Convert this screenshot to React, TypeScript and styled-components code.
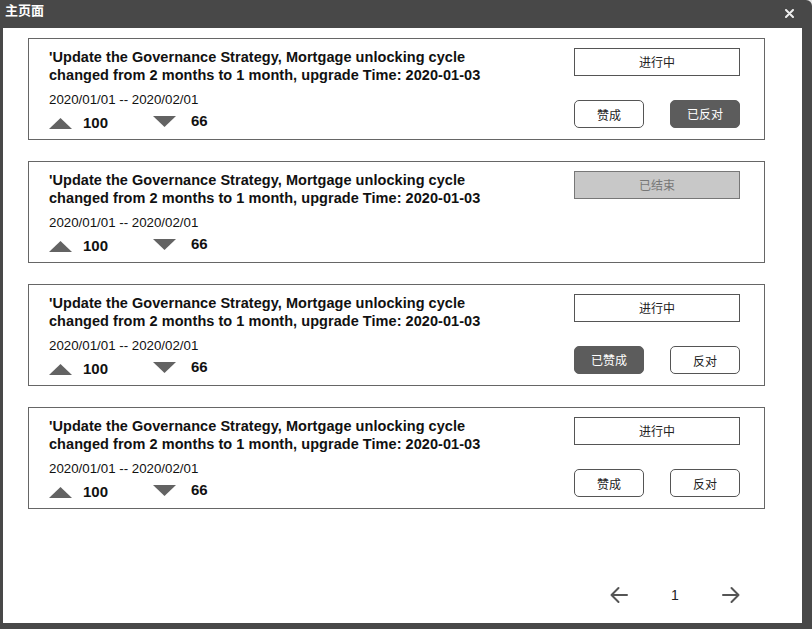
import styled, { createGlobalStyle } from 'styled-components';

const GlobalStyle = createGlobalStyle`
  html, body {
    margin: 0;
    padding: 0;
    background: #e6e6e6;
  }
  body {
    font-family: "Liberation Sans", "Noto Sans CJK SC", Arial, sans-serif;
    color: #111;
  }
`;

const Window = styled.div`
  width: 812px;
  height: 629px;
  display: flex;
  flex-direction: column;
  background: #484848;
  border-top-right-radius: 6px;
  overflow: hidden;
`;

const TitleBar = styled.div`
  height: 28px;
  flex-shrink: 0;
  display: flex;
  align-items: flex-start;
  justify-content: space-between;
  padding: 2px 18px 0 5px;
  box-sizing: border-box;
`;

const TitleText = styled.span`
  font-family: "Noto Sans CJK SC", sans-serif;
  font-size: 13px;
  font-weight: 700;
  line-height: 16px;
  color: #fff;
`;

const CloseBtn = styled.div`
  width: 9px;
  height: 9px;
  margin-top: 7px;
  display: flex;
  cursor: pointer;
`;

const Body = styled.div`
  flex: 1;
  margin: 0 10px 6px 3px;
  background: #fff;
  display: flex;
  flex-direction: column;
  padding: 10px 37px 0 25px;
  box-sizing: border-box;
`;

const List = styled.div`
  display: flex;
  flex-direction: column;
  gap: 21px;
`;

const Card = styled.div`
  height: 102px;
  box-sizing: border-box;
  border: 1px solid #666;
  display: flex;
  justify-content: space-between;
  padding: 9px 24px 0 20px;
`;

const Info = styled.div`
  display: flex;
  flex-direction: column;
`;

const Title = styled.div`
  font-size: 14.5px;
  font-weight: 700;
  line-height: 18px;
  width: 460px;
  letter-spacing: 0.05px;
  color: #111;
`;

const DateRange = styled.div`
  margin-top: 8px;
  font-size: 13.3px;
  line-height: 16px;
  color: #111;
`;

const Votes = styled.div`
  display: flex;
  align-items: center;
  margin-top: 6px;
  height: 18px;
`;

const Vote = styled.div<{ $width: number; $gap: number; $lift?: number }>`
  display: flex;
  align-items: center;
  width: ${({ $width }) => $width}px;
  gap: ${({ $gap }) => $gap}px;
  transform: translateY(${({ $lift }) => -($lift || 0)}px);
`;

const Count = styled.span`
  font-size: 15px;
  font-weight: 700;
  line-height: 18px;
  color: #111;
`;

const Actions = styled.div`
  width: 166px;
  display: flex;
  flex-direction: column;
`;

const Status = styled.div<{ $ended?: boolean }>`
  height: 28px;
  box-sizing: border-box;
  border: 1px solid ${({ $ended }) => ($ended ? '#777' : '#555')};
  background: ${({ $ended }) => ($ended ? '#c8c8c8' : '#fff')};
  color: ${({ $ended }) => ($ended ? '#777' : '#222')};
  font-family: "Noto Sans CJK SC", sans-serif;
  font-size: 12px;
  display: flex;
  align-items: center;
  justify-content: center;
  padding-bottom: 1px;
`;

const ButtonRow = styled.div`
  margin-top: 24px;
  display: flex;
  justify-content: space-between;
`;

const VoteButton = styled.div<{ $active?: boolean }>`
  width: 70px;
  height: 28px;
  box-sizing: border-box;
  border-radius: 5px;
  border: 1px solid ${({ $active }) => ($active ? '#5c5c5c' : '#555')};
  background: ${({ $active }) => ($active ? '#5c5c5c' : '#fff')};
  color: ${({ $active }) => ($active ? '#fff' : '#222')};
  font-family: "Noto Sans CJK SC", sans-serif;
  font-size: 12px;
  display: flex;
  align-items: center;
  justify-content: center;
  padding-bottom: ${({ $active }) => ($active ? 2 : 0)}px;
  cursor: pointer;
`;

const Pager = styled.div`
  margin-top: auto;
  margin-bottom: 19px;
  padding-right: 25px;
  display: flex;
  justify-content: flex-end;
  align-items: center;
  gap: 42px;
`;

const PageNum = styled.span`
  font-size: 14px;
  line-height: 18px;
  color: #222;
  width: 10px;
  text-align: center;
`;

const ArrowBtn = styled.div`
  display: flex;
  cursor: pointer;
`;

type Item = {
  status: 'open' | 'ended';
  vote?: 'for' | 'against' | 'none';
};

const items: Item[] = [
  { status: 'open', vote: 'against' },
  { status: 'ended' },
  { status: 'open', vote: 'for' },
  { status: 'open', vote: 'none' },
];

const TITLE = "'Update the Governance Strategy, Mortgage unlocking cycle changed from 2 months to 1 month, upgrade Time: 2020-01-03";

function UpIcon() {
  return (
    <svg width="23" height="11" viewBox="0 0 23 11">
      <polygon points="11.5,0 23,11 0,11" fill="#636363" />
    </svg>
  );
}

function DownIcon() {
  return (
    <svg width="23" height="11" viewBox="0 0 23 11">
      <polygon points="0,0 23,0 11.5,11" fill="#636363" />
    </svg>
  );
}

function ProposalCard({ item }: { item: Item }) {
  return (
    <Card>
      <Info>
        <Title>{TITLE}</Title>
        <DateRange>2020/01/01 -- 2020/02/01</DateRange>
        <Votes>
          <Vote $width={104} $gap={11}>
            <UpIcon />
            <Count>100</Count>
          </Vote>
          <Vote $width={80} $gap={15} $lift={2}>
            <DownIcon />
            <Count>66</Count>
          </Vote>
        </Votes>
      </Info>
      <Actions>
        <Status $ended={item.status === 'ended'}>
          {item.status === 'ended' ? '已结束' : '进行中'}
        </Status>
        {item.status === 'open' && (
          <ButtonRow>
            <VoteButton $active={item.vote === 'for'}>
              {item.vote === 'for' ? '已赞成' : '赞成'}
            </VoteButton>
            <VoteButton $active={item.vote === 'against'}>
              {item.vote === 'against' ? '已反对' : '反对'}
            </VoteButton>
          </ButtonRow>
        )}
      </Actions>
    </Card>
  );
}

export default function App() {
  return (
    <>
      <GlobalStyle />
      <Window>
        <TitleBar>
          <TitleText>主页面</TitleText>
          <CloseBtn>
            <svg width="9" height="9" viewBox="0 0 9 9">
              <path d="M1 1L8 8M8 1L1 8" stroke="#eee" strokeWidth="2" strokeLinecap="round" />
            </svg>
          </CloseBtn>
        </TitleBar>
        <Body>
          <List>
            {items.map((item, i) => (
              <ProposalCard key={i} item={item} />
            ))}
          </List>
          <Pager>
            <ArrowBtn>
              <svg width="18" height="18" viewBox="0 0 18 18" fill="none" stroke="#555" strokeWidth="2" strokeLinecap="round" strokeLinejoin="round">
                <path d="M17 9H1.5M8.5 2L1.5 9L8.5 16" />
              </svg>
            </ArrowBtn>
            <PageNum>1</PageNum>
            <ArrowBtn>
              <svg width="18" height="18" viewBox="0 0 18 18" fill="none" stroke="#555" strokeWidth="2" strokeLinecap="round" strokeLinejoin="round">
                <path d="M1 9H16.5M9.5 2L16.5 9L9.5 16" />
              </svg>
            </ArrowBtn>
          </Pager>
        </Body>
      </Window>
    </>
  );
}
